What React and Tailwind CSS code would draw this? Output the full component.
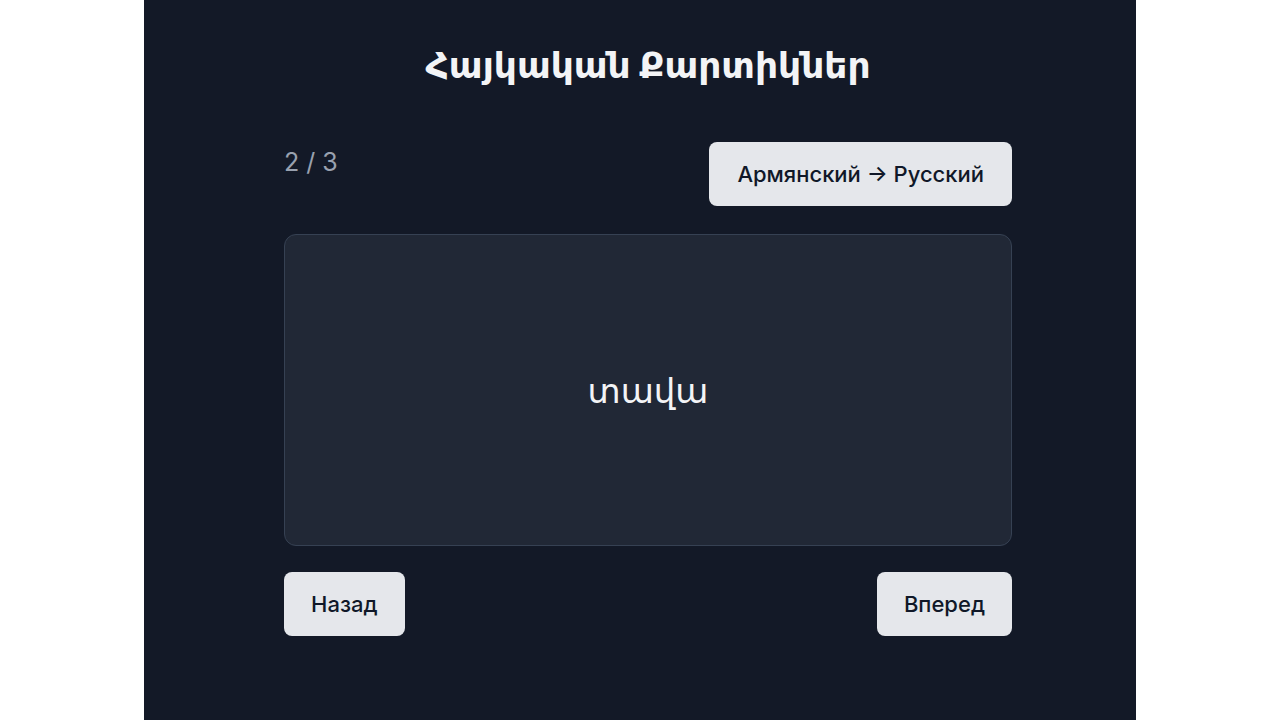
import { useState } from 'react';

const cards = [
  { hy: 'բարև', ru: 'привет' },
  { hy: 'տավա', ru: 'доска' },
  { hy: 'գիրք', ru: 'книга' },
];

export default function App(){
  const [idx,setIdx]=useState(1);
  const [dir,setDir]=useState('hy');
  const card = cards[idx];
  return (
    <div className="min-h-screen bg-white flex justify-center" style={{ fontFamily: 'Inter, "Noto Sans", "DejaVu Sans", sans-serif' }}>
      <div className="w-[992px] min-h-screen bg-[#131927] pt-[45px] pl-4 flex flex-col items-center">
        <h1 className="text-[36px] leading-10 font-bold text-gray-100">Հայկական Քարտիկներ</h1>
        <div className="w-[728px] mt-[57px]">
          <div className="flex items-start justify-between">
            <div className="text-[25px] leading-10 text-gray-400">{idx+1} / {cards.length}</div>
            <button onClick={()=>setDir(dir==='hy'?'ru':'hy')} className="h-16 px-[28px] rounded-lg bg-gray-200 text-gray-900 text-[22px] font-medium">
              {dir==='hy' ? 'Армянский → Русский' : 'Русский → Армянский'}
            </button>
          </div>
          <div className="mt-7 h-[312px] rounded-xl bg-[#212836] border border-gray-700 flex items-center justify-center">
            <div className="text-[34px] text-gray-100">{dir==='hy' ? card.hy : card.ru}</div>
          </div>
          <div className="mt-[26px] flex justify-between">
            <button onClick={()=>setIdx(Math.max(0,idx-1))} className="h-16 px-[27px] rounded-lg bg-gray-200 text-gray-900 text-[22px] font-medium">Назад</button>
            <button onClick={()=>setIdx(Math.min(cards.length-1,idx+1))} className="h-16 px-[27px] rounded-lg bg-gray-200 text-gray-900 text-[22px] font-medium">Вперед</button>
          </div>
        </div>
      </div>
    </div>
  );
}
